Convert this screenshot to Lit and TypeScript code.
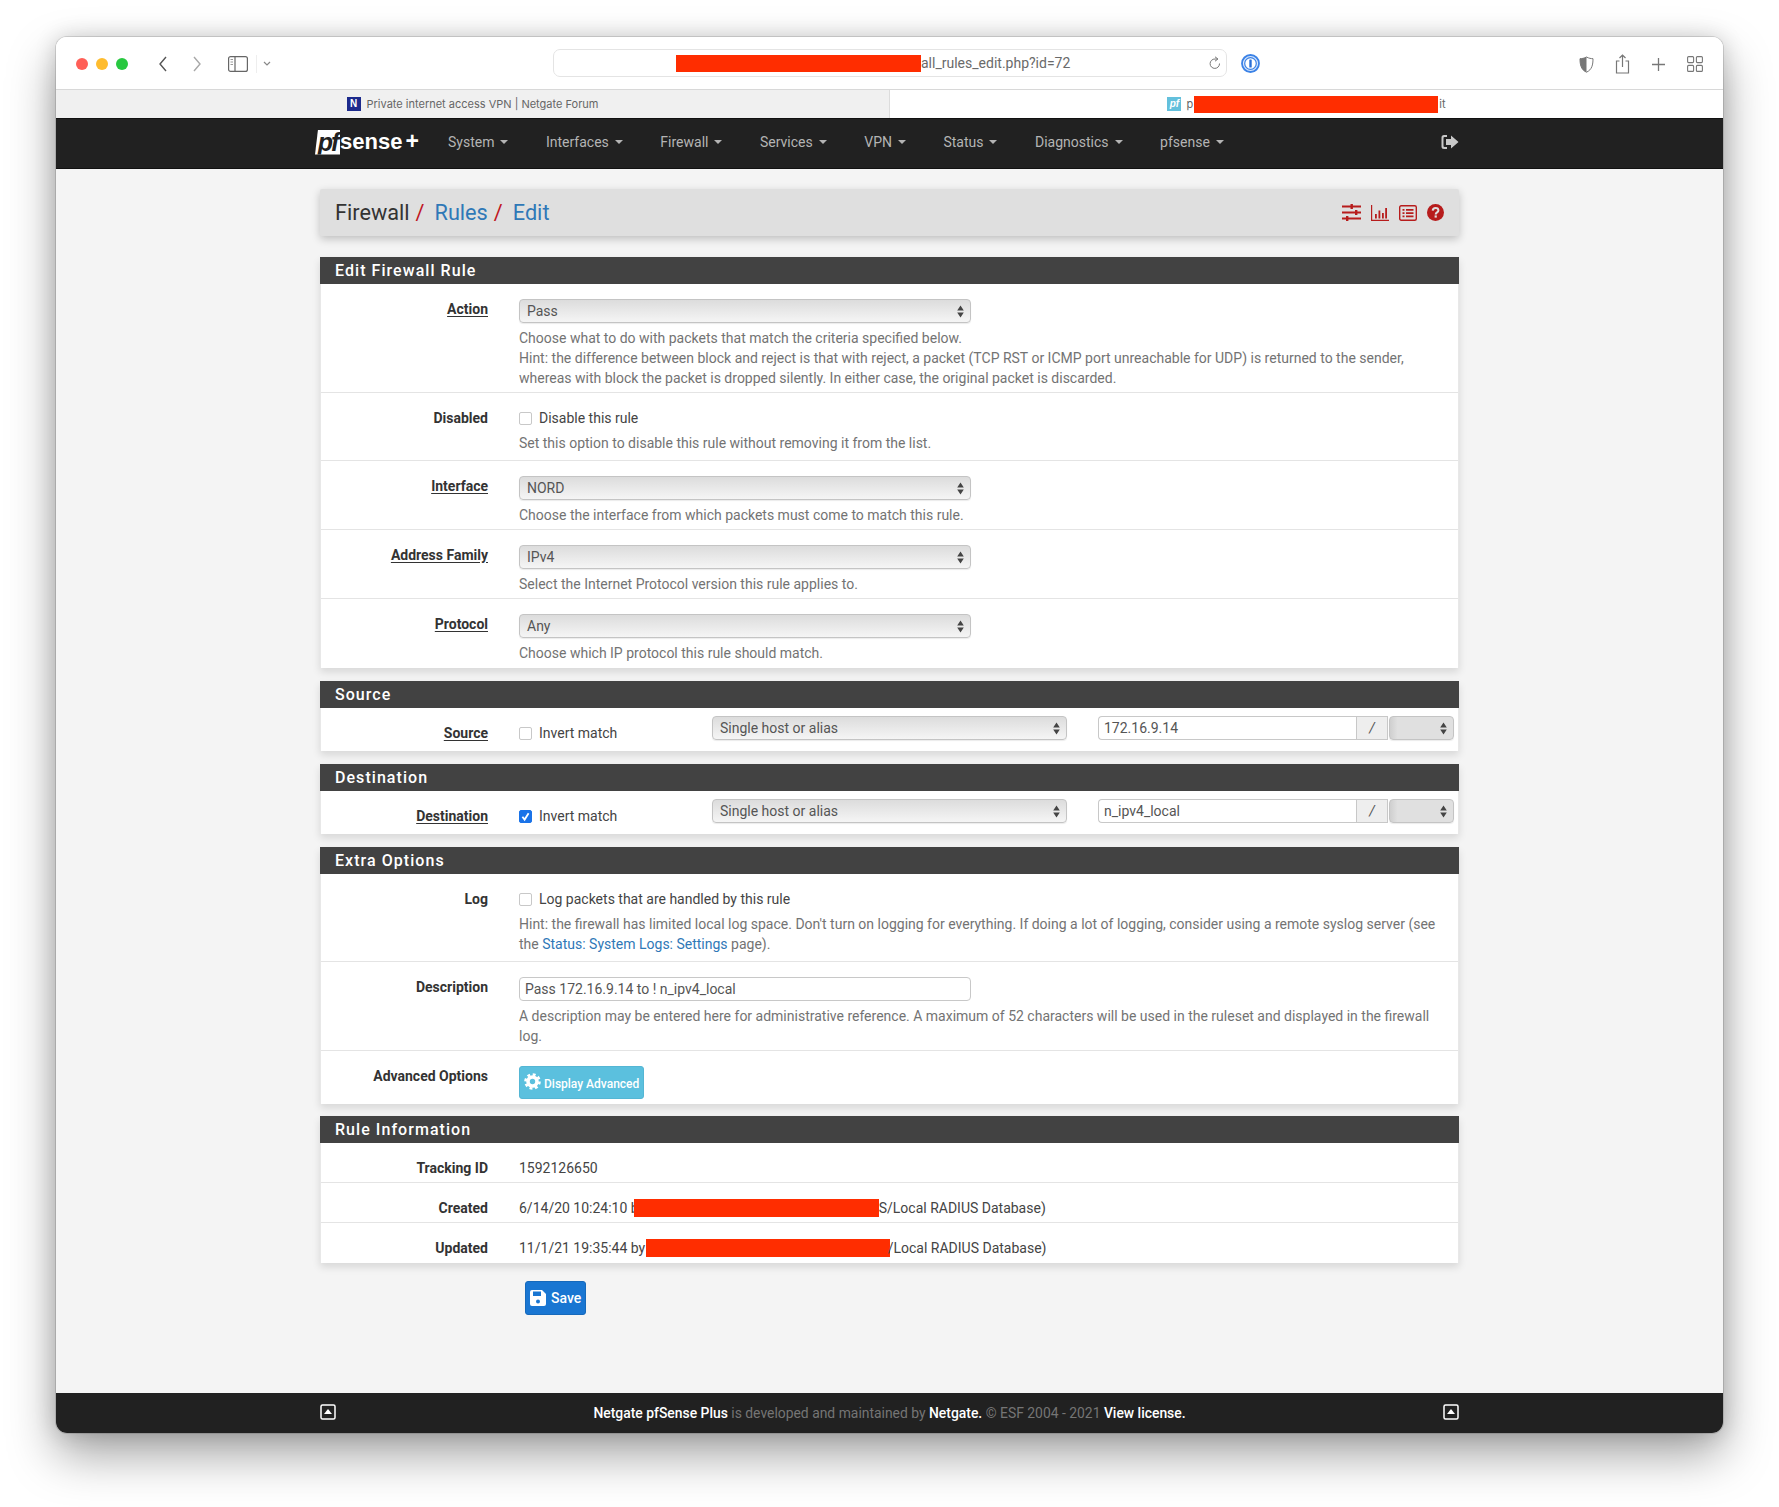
import { LitElement, html, css } from 'lit';
import { customElement } from 'lit/decorators.js';

const RED = '#b71c1c';

const navItems = ['System', 'Interfaces', 'Firewall', 'Services', 'VPN', 'Status', 'Diagnostics', 'pfsense'];

// select with the native mac up/down arrows
const selectBox = (value: string, extra = '') => html`
  <div class="select ${extra}">
    <span>${value}</span>
    <svg width="7" height="13" viewBox="0 0 7 13"><path d="M3.5 0.5 6.8 5.500H.2zM3.5 12.500.2 7.500h6.600z" fill="#444" /></svg>
  </div>
`;

const checkbox = (checked = false) => html`
  <span class="check ${checked ? 'on' : ''}">
    ${checked
      ? html`<svg width="13" height="13" viewBox="0 0 13 13"><path d="M3.4 6.8 5.6 9.6 9.6 3.2" fill="none" stroke="#fff" stroke-width="1.8" /></svg>`
      : ''}
  </span>
`;

const caretUp = html`
  <svg width="16" height="16" viewBox="0 0 16 16">
    <rect x="1" y="1" width="14" height="14" rx="1.5" fill="none" stroke="#fff" stroke-width="1.5" />
    <path d="M8 5 12 10H4z" fill="#fff" />
  </svg>
`;

@customElement('app-root')
export class AppRoot extends LitElement {
  static styles = css`
    :host {
      display: block;
      box-sizing: border-box;
      width: 1779px;
      height: 1507px;
      padding: 37px 56px 74px;
      background: #fff;
      font-family: Roboto, 'Liberation Sans', sans-serif;
      font-size: 14px;
      line-height: 20px;
      color: #333;
      overflow: hidden;
    }

    .window {
      height: 100%;
      display: flex;
      flex-direction: column;
      border-radius: 11px;
      overflow: hidden;
      background: #f4f4f4;
    }

    .shadow {
      height: 100%;
      border-radius: 11px;
      box-shadow: 0 22px 48px rgba(0, 0, 0, 0.36), 0 0 22px rgba(0, 0, 0, 0.16), 0 0 0 1px rgba(0, 0, 0, 0.12);
    }

    .toolbar {
      box-sizing: border-box;
      height: 53px;
      flex: none;
      background: #fff;
      border-bottom: 1px solid #d8d8d8;
      display: flex;
      align-items: center;
      padding-left: 20px;
      padding-top: 2px;
    }

    .lights {
      display: flex;
      gap: 8px;
      margin-right: 30px;
    }

    .lights i {
      width: 12px;
      height: 12px;
      border-radius: 50%;
    }

    .tool-left {
      display: flex;
      align-items: center;
      width: 477px;
    }

    .tool-left svg,
    .tool-right svg {
      flex: none;
    }

    .url {
      box-sizing: border-box;
      width: 674px;
      height: 28px;
      margin-top: -2px;
      border: 1px solid #e4e4e4;
      border-radius: 7px;
      display: flex;
      align-items: center;
      padding-left: 122px;
      padding-right: 5px;
      font-size: 14px;
      color: #6a6a6a;
    }

    .url .fill {
      flex: 1;
    }

    .redact {
      display: inline-block;
      background: #ff2d00;
      vertical-align: middle;
    }

    .tool-right {
      flex: 1;
      display: flex;
      align-items: center;
      padding-left: 14px;
      padding-right: 20px;
    }

    .tool-right .icons {
      margin-left: auto;
      display: flex;
      align-items: center;
      gap: 21px;
    }

    .tabs {
      height: 28px;
      flex: none;
      display: flex;
      font-family: Inter, Roboto, sans-serif;
      font-size: 11px;
      color: #666;
    }

    .tab {
      flex: 1;
      display: flex;
      align-items: center;
      justify-content: center;
      background: #fff;
    }

    .tab.back {
      background: #f0f0f0;
      border-right: 1px solid #dcdcdc;
    }

    .fav {
      width: 14px;
      height: 14px;
      margin-right: 6px;
      font: italic 700 10px/14px 'Liberation Sans', sans-serif;
      text-align: center;
      color: #fff;
    }

    .fav.n {
      background: #1c2a8c;
      font-style: normal;
    }

    .fav.pf {
      background: #63c0dc;
      margin-right: 5px;
    }

    .nav {
      box-sizing: border-box;
      height: 51px;
      flex: none;
      background: #212121;
      border-top: 1px solid #111;
      border-bottom: 1px solid #111;
      display: flex;
      align-items: center;
      padding-left: 259px;
      padding-bottom: 3px;
      color: #b4b4b4;
    }

    .logo {
      display: flex;
      align-items: center;
      width: 133px;
      margin-top: -1px;
      color: #fff;
    }

    .logo .pf {
      width: 25px;
      height: 25px;
      background: #fff;
      color: #212121;
      font: italic 700 25px/25px 'Liberation Sans', sans-serif;
      text-align: center;
      letter-spacing: -2px;
      border-radius: 3px 0 0 0;
      clip-path: polygon(12% 0, 100% 0, 100% 100%, 0 100%);
      margin-top: 1px;
    }

    .logo .sense {
      font: 700 22px/25px 'Liberation Sans', sans-serif;
    }

    .logo .plus {
      font: 700 23px/25px 'Liberation Sans', sans-serif;
      margin-left: 3px;
    }

    .menu {
      display: flex;
      gap: 37.5px;
    }

    .menu span {
      display: flex;
      align-items: center;
      gap: 6px;
    }

    .menu span::after {
      content: '';
      border-top: 4px solid #b4b4b4;
      border-left: 4px solid transparent;
      border-right: 4px solid transparent;
    }

    .logout {
      margin-left: auto;
      margin-right: 264px;
    }

    .page {
      flex: 1;
      width: 1139px;
      align-self: center;
      padding-top: 20px;
    }

    .crumbs {
      height: 47px;
      background: #dfdfdf;
      border-radius: 2px;
      box-shadow: 0 3px 9px rgba(0, 0, 0, 0.22);
      display: flex;
      align-items: center;
      padding: 0 15px 0 15px;
      margin-bottom: 21px;
      font-size: 21.7px;
      color: #333;
    }

    .crumbs > span,
    .crumbs > a,
    .crumbs > b {
      margin-top: 1px;
    }

    .crumbs a {
      color: #2f78b7;
    }

    .crumbs b {
      font-weight: 400;
      color: #c0171f;
      margin-left: 6px;
      margin-right: 10px;
    }

    .crumbs .acts {
      margin-left: auto;
      display: flex;
      align-items: center;
      gap: 10px;
    }

    .panel {
      background: #fff;
      margin-bottom: 13px;
      border-left: 1px solid #e8e8e8;
      border-right: 1px solid #e8e8e8;
      box-shadow: 0 4px 8px rgba(0, 0, 0, 0.12);
    }

    .panel.tight {
      margin-bottom: 12px;
    }

    .panel h2 {
      margin: 0 -1px;
      height: 27px;
      background: #424242;
      color: #fff;
      font-size: 16px;
      font-weight: 500;
      line-height: 27px;
      letter-spacing: 1.05px;
      padding-left: 15px;
    }

    .row {
      box-sizing: border-box;
      display: grid;
      grid-template-columns: 167px 1fr;
      column-gap: 31px;
      padding: 15px 15px 4px 0;
      border-bottom: 1px solid #e4e4e4;
    }

    .row.roomy {
      padding-bottom: 7px;
    }

    .row:last-child {
      border-bottom-color: transparent;
    }

    .row.wide {
      grid-template-columns: 167px 162px 355px 356px;
      padding: 8px 0 7px;
    }

    .row.wide .label,
    .row.wide .inline {
      padding-top: 7px;
    }

    .label {
      text-align: right;
      font-weight: 700;
      color: #333;
    }

    .label.req {
      text-decoration: underline;
      text-underline-offset: 2px;
    }

    .help {
      color: #737373;
      margin-top: 5px;
    }

    .help a {
      color: #2f78b7;
    }

    .inline {
      display: flex;
      align-items: center;
      gap: 7px;
      color: #444;
    }

    .check {
      box-sizing: border-box;
      width: 13px;
      height: 13px;
      border: 1px solid #c8c8c8;
      border-radius: 2px;
      background: #fff;
      flex: none;
    }

    .check.on {
      background: #1a73e8;
      border-color: #1a73e8;
    }

    .check svg {
      display: block;
      margin: -1px;
    }

    .select {
      box-sizing: border-box;
      height: 24px;
      width: 452px;
      border: 1px solid #c4c4c4;
      border-radius: 4px;
      background: linear-gradient(#dcdcdc, #f5f5f5);
      box-shadow: 0 1px 1px rgba(0, 0, 0, 0.08);
      display: flex;
      align-items: center;
      justify-content: space-between;
      padding: 0 6px 0 7px;
      color: #555;
    }

    .wide .select {
      width: 100%;
    }

    .group {
      display: flex;
      height: 24px;
    }

    .group input {
      flex: 1;
      min-width: 0;
    }

    input.text {
      box-sizing: border-box;
      height: 24px;
      border: 1px solid #c8c8c8;
      border-radius: 4px;
      background: #fff;
      padding: 0 5px;
      font: inherit;
      color: #555;
      outline: none;
    }

    .group input.text {
      border-radius: 4px 0 0 4px;
      border-right: none;
    }

    .addon {
      box-sizing: border-box;
      width: 32px;
      border: 1px solid #c8c8c8;
      background: #eee;
      text-align: center;
      font-style: italic;
      line-height: 22px;
      color: #555;
    }

    .wide .select.mini {
      width: 65px;
      flex: none;
      margin-left: 1px;
      background: linear-gradient(to right, #cfcfcf, #e0e0e0 12%, #e0e0e0);
    }

    input.desc {
      width: 452px;
      display: block;
    }

    .btn {
      display: inline-flex;
      align-items: center;
      border-radius: 3px;
      color: #fff;
      font-weight: 500;
    }

    .btn.info {
      box-sizing: border-box;
      width: 125px;
      height: 33px;
      background: #5bc0de;
      border: 1px solid #54b6d4;
      font-size: 12px;
      padding-left: 4px;
      gap: 3px;
    }

    .btn.info svg {
      margin-top: -2px;
    }

    .btn.info span {
      margin-top: 3px;
    }

    .btn.save {
      box-sizing: border-box;
      width: 61px;
      height: 34px;
      background: #1976d2;
      border: 1px solid #1669bb;
      font-size: 14px;
      padding-left: 4px;
      gap: 5px;
      margin: 5px 0 0 205px;
    }

    .btn.save span {
      margin-top: -1px;
    }

    .value {
      color: #444;
    }

    .value .redact {
      height: 18px;
      vertical-align: -4px;
    }

    .footer {
      height: 40px;
      flex: none;
      background: #212121;
      color: #757575;
      font-size: 13.9px;
      display: flex;
      justify-content: center;
    }

    .footer .inner {
      width: 1139px;
      display: flex;
      align-items: center;
      justify-content: space-between;
    }

    .footer b {
      color: #fff;
      font-weight: 500;
    }

    .footer svg {
      margin-top: -3px;
    }
  `;

  private renderActions() {
    return html`
      <div class="acts">
        <svg width="19" height="17" viewBox="0 0 19 17" fill="${RED}">
          <rect y="1.5" width="19" height="2" /><rect y="7.5" width="19" height="2" /><rect y="13.5" width="19" height="2" />
          <rect x="8.5" y="0" width="2.4" height="5" /><rect x="13" y="6" width="2.4" height="5" /><rect x="4" y="12" width="2.4" height="5" />
        </svg>
        <svg width="18" height="16" viewBox="0 0 18 16" fill="${RED}">
          <path d="M0 0h1.2v14.8H18V16H0z" /><rect x="4" y="9" width="1.8" height="4.5" /><rect x="7.5" y="5.5" width="1.8" height="8" />
          <rect x="11" y="8" width="1.8" height="5.5" /><rect x="14.2" y="3" width="1.8" height="10.5" />
        </svg>
        <svg width="18" height="16" viewBox="0 0 18 16">
          <rect x=".7" y=".7" width="16.6" height="14.6" rx="1.5" fill="none" stroke="${RED}" stroke-width="1.4" />
          <path d="M3.5 4h2v1.8h-2zM7 4h7.5v1.8H7zM3.5 7.2h2V9h-2zM7 7.2h7.5V9H7zM3.5 10.4h2v1.8h-2zM7 10.4h7.5v1.8H7z" fill="${RED}" />
        </svg>
        <svg width="17" height="17" viewBox="0 0 17 17">
          <circle cx="8.5" cy="8.5" r="8.5" fill="${RED}" />
          <path d="M5.7 6.6C5.8 4.8 7 4 8.6 4c1.7 0 2.8 1 2.8 2.4 0 2-2.7 2-2.7 4" fill="none" stroke="#dfdfdf" stroke-width="2" />
          <rect x="7.6" y="11.4" width="2.2" height="2.2" fill="#dfdfdf" />
        </svg>
      </div>
    `;
  }

  private renderAddressRow(name: string, inverted: boolean, address: string) {
    return html`
      <div class="row wide">
        <div class="label req">${name}</div>
        <div class="inline">${checkbox(inverted)}Invert match</div>
        ${selectBox('Single host or alias')}
        <div class="group">
          <input class="text" .value=${address} readonly />
          <div class="addon">/</div>
          ${selectBox('', 'mini')}
        </div>
      </div>
    `;
  }

  render() {
    return html`
      <div class="shadow">
        <div class="window">
          <div class="toolbar">
            <div class="tool-left">
              <div class="lights">
                <i style="background:#ff5f57"></i><i style="background:#febc2e"></i><i style="background:#28c840"></i>
              </div>
              <svg width="10" height="16" viewBox="0 0 10 16" style="margin-right:24px">
                <path d="M8 1 2 8l6 7" fill="none" stroke="#555" stroke-width="1.4" />
              </svg>
              <svg width="10" height="16" viewBox="0 0 10 16" style="margin-right:26px">
                <path d="M2 1l6 7-6 7" fill="none" stroke="#a8a8a8" stroke-width="1.4" />
              </svg>
              <svg width="20" height="16" viewBox="0 0 20 16">
                <rect x=".6" y=".6" width="18.8" height="14.800" rx="2" fill="none" stroke="#666" stroke-width="1.2" />
                <path d="M7 .6v14.800" stroke="#666" stroke-width="1.2" />
                <path d="M2.500 3.500h2.500M2.500 6h2.500M2.500 8.500h2.500" stroke="#999" stroke-width="1" />
              </svg>
              <svg width="1" height="18" style="margin:0 6px 0 8px"><rect width="1" height="18" fill="#eee" /></svg>
              <svg width="8" height="6" viewBox="0 0 8 6"><path d="M1 1l3 3 3-3" fill="none" stroke="#888" stroke-width="1.2" /></svg>
            </div>
            <div class="url">
              <span class="redact" style="width:245px;height:17px"></span>
              <span>all_rules_edit.php?id=72</span>
              <span class="fill"></span>
              <svg width="12" height="14" viewBox="0 0 12 14">
                <path d="M10.500 7.500A4.700 4.700 0 1 1 6 3h2" fill="none" stroke="#777" stroke-width="1" />
                <path d="M6 .8 9 3 6 5.200" fill="none" stroke="#777" stroke-width="1" />
              </svg>
            </div>
            <div class="tool-right">
              <svg width="19" height="19" viewBox="0 0 19 19" style="margin-top:-2px">
                <circle cx="9.500" cy="9.500" r="8.500" fill="#dbe8fb" stroke="#3b82e6" stroke-width="1.800" />
                <circle cx="9.500" cy="9.500" r="5.800" fill="#fff" stroke="#3b82e6" stroke-width="1.200" />
                <rect x="8.300" y="5.500" width="2.400" height="8" rx=".6" fill="#2a6fd6" />
              </svg>
              <div class="icons">
                <svg width="15" height="17" viewBox="0 0 15 17">
                  <path d="M7.500 1C5 2.400 3 2.600 1 2.700c0 6 1 11 6.500 13.500C13 13.700 14 8.700 14 2.700 12 2.600 10 2.400 7.500 1z" fill="#fff" stroke="#777" stroke-width="1" />
                  <path d="M7.500 1C5 2.400 3 2.600 1 2.700c0 6 1 11 6.500 13.500z" fill="#777" />
                </svg>
                <svg width="15" height="20" viewBox="0 0 15 20">
                  <path d="M4.500 7H1.500v12h12V7h-3M7.500 1v12M4.500 4l3-3 3 3" fill="none" stroke="#777" stroke-width="1.200" />
                </svg>
                <svg width="15" height="15" viewBox="0 0 15 15"><path d="M7.500 1v13M1 7.500h13" stroke="#777" stroke-width="1.300" /></svg>
                <svg width="16" height="16" viewBox="0 0 16 16" fill="none" stroke="#777" stroke-width="1.100">
                  <rect x=".6" y=".6" width="6" height="6" rx="1" /><rect x="9.400" y=".6" width="6" height="6" rx="1" />
                  <rect x=".6" y="9.400" width="6" height="6" rx="1" /><rect x="9.400" y="9.400" width="6" height="6" rx="1" />
                </svg>
              </div>
            </div>
          </div>

          <div class="tabs">
            <div class="tab back"><span class="fav n">N</span>Private internet access VPN | Netgate Forum</div>
            <div class="tab">
              <span class="fav pf">pf</span>p<span class="redact" style="width:244px;height:17px;margin:0 1px"></span>it
            </div>
          </div>

          <div class="nav">
            <div class="logo"><span class="pf">pf</span><span class="sense">sense</span><span class="plus">+</span></div>
            <div class="menu">${navItems.map((n) => html`<span>${n}</span>`)}</div>
            <svg class="logout" width="18" height="16" viewBox="0 0 18 16" fill="#c8c8c8">
              <path d="M6 1H3a2.500 2.500 0 0 0-2.500 2.500v9A2.500 2.500 0 0 0 3 15h3v-2H3.500a1 1 0 0 1-1-1V4a1 1 0 0 1 1-1H6z" />
              <path d="M10 1.500 17.500 8 10 14.500V11H5V5h5z" />
            </svg>
          </div>

          <div class="page">
            <div class="crumbs">
              <span>Firewall</span><b>/</b><a>Rules</a><b>/</b><a>Edit</a>
              ${this.renderActions()}
            </div>

            <section class="panel">
              <h2>Edit Firewall Rule</h2>
              <div class="row">
                <div class="label req">Action</div>
                <div>
                  ${selectBox('Pass')}
                  <div class="help">
                    Choose what to do with packets that match the criteria specified below.<br />
                    Hint: the difference between block and reject is that with reject, a packet (TCP RST or ICMP port unreachable for UDP) is returned to the sender, whereas with block the packet is dropped silently. In either case, the original packet is discarded.
                  </div>
                </div>
              </div>
              <div class="row roomy">
                <div class="label">Disabled</div>
                <div>
                  <div class="inline">${checkbox()}Disable this rule</div>
                  <div class="help">Set this option to disable this rule without removing it from the list.</div>
                </div>
              </div>
              <div class="row">
                <div class="label req">Interface</div>
                <div>${selectBox('NORD')}<div class="help">Choose the interface from which packets must come to match this rule.</div></div>
              </div>
              <div class="row">
                <div class="label req">Address Family</div>
                <div>${selectBox('IPv4')}<div class="help">Select the Internet Protocol version this rule applies to.</div></div>
              </div>
              <div class="row">
                <div class="label req">Protocol</div>
                <div>${selectBox('Any')}<div class="help">Choose which IP protocol this rule should match.</div></div>
              </div>
            </section>

            <section class="panel">
              <h2>Source</h2>
              ${this.renderAddressRow('Source', false, '172.16.9.14')}
            </section>

            <section class="panel">
              <h2>Destination</h2>
              ${this.renderAddressRow('Destination', true, 'n_ipv4_local')}
            </section>

            <section class="panel tight">
              <h2>Extra Options</h2>
              <div class="row roomy">
                <div class="label">Log</div>
                <div>
                  <div class="inline">${checkbox()}Log packets that are handled by this rule</div>
                  <div class="help">
                    Hint: the firewall has limited local log space. Don't turn on logging for everything. If doing a lot of logging, consider using a remote syslog server (see<br />the <a>Status: System Logs: Settings</a> page).
                  </div>
                </div>
              </div>
              <div class="row">
                <div class="label">Description</div>
                <div>
                  <input class="text desc" .value=${'Pass 172.16.9.14 to ! n_ipv4_local'} readonly />
                  <div class="help">
                    A description may be entered here for administrative reference. A maximum of 52 characters will be used in the ruleset and displayed in the firewall log.
                  </div>
                </div>
              </div>
              <div class="row">
                <div class="label">Advanced Options</div>
                <div>
                  <span class="btn info">
                    <svg width="17" height="17" viewBox="0 0 17 17">
                      <circle cx="8.500" cy="8.500" r="4.500" fill="none" stroke="#fff" stroke-width="3.600" />
                      <circle cx="8.500" cy="8.500" r="7" fill="none" stroke="#fff" stroke-width="2.600" stroke-dasharray="2.900 2.600" />
                    </svg>
                    <span>Display Advanced</span>
                  </span>
                </div>
              </div>
            </section>

            <section class="panel">
              <h2>Rule Information</h2>
              <div class="row"><div class="label">Tracking ID</div><div class="value">1592126650</div></div>
              <div class="row">
                <div class="label">Created</div>
                <div class="value">6/14/20 10:24:10 b<span class="redact" style="width:245px;margin-left:-5px"></span>S/Local RADIUS Database)</div>
              </div>
              <div class="row">
                <div class="label">Updated</div>
                <div class="value">11/1/21 19:35:44 by <span class="redact" style="width:244px;margin:0 -2px 0 -3px"></span>/Local RADIUS Database)</div>
              </div>
            </section>

            <span class="btn save">
              <svg width="16" height="16" viewBox="0 0 16 16">
                <path d="M2 0h10l4 4v10a2 2 0 0 1-2 2H2a2 2 0 0 1-2-2V2a2 2 0 0 1 2-2z" fill="#fff" />
                <rect x="3" y="1.500" width="8" height="4.500" fill="#1976d2" />
                <circle cx="8" cy="11.500" r="2" fill="#1976d2" />
              </svg>
              <span>Save</span>
            </span>
          </div>

          <div class="footer">
            <div class="inner">
              ${caretUp}
              <span><b>Netgate pfSense Plus</b> is developed and maintained by <b>Netgate.</b> © ESF 2004 - 2021 <b>View license.</b></span>
              ${caretUp}
            </div>
          </div>
        </div>
      </div>
    `;
  }
}
